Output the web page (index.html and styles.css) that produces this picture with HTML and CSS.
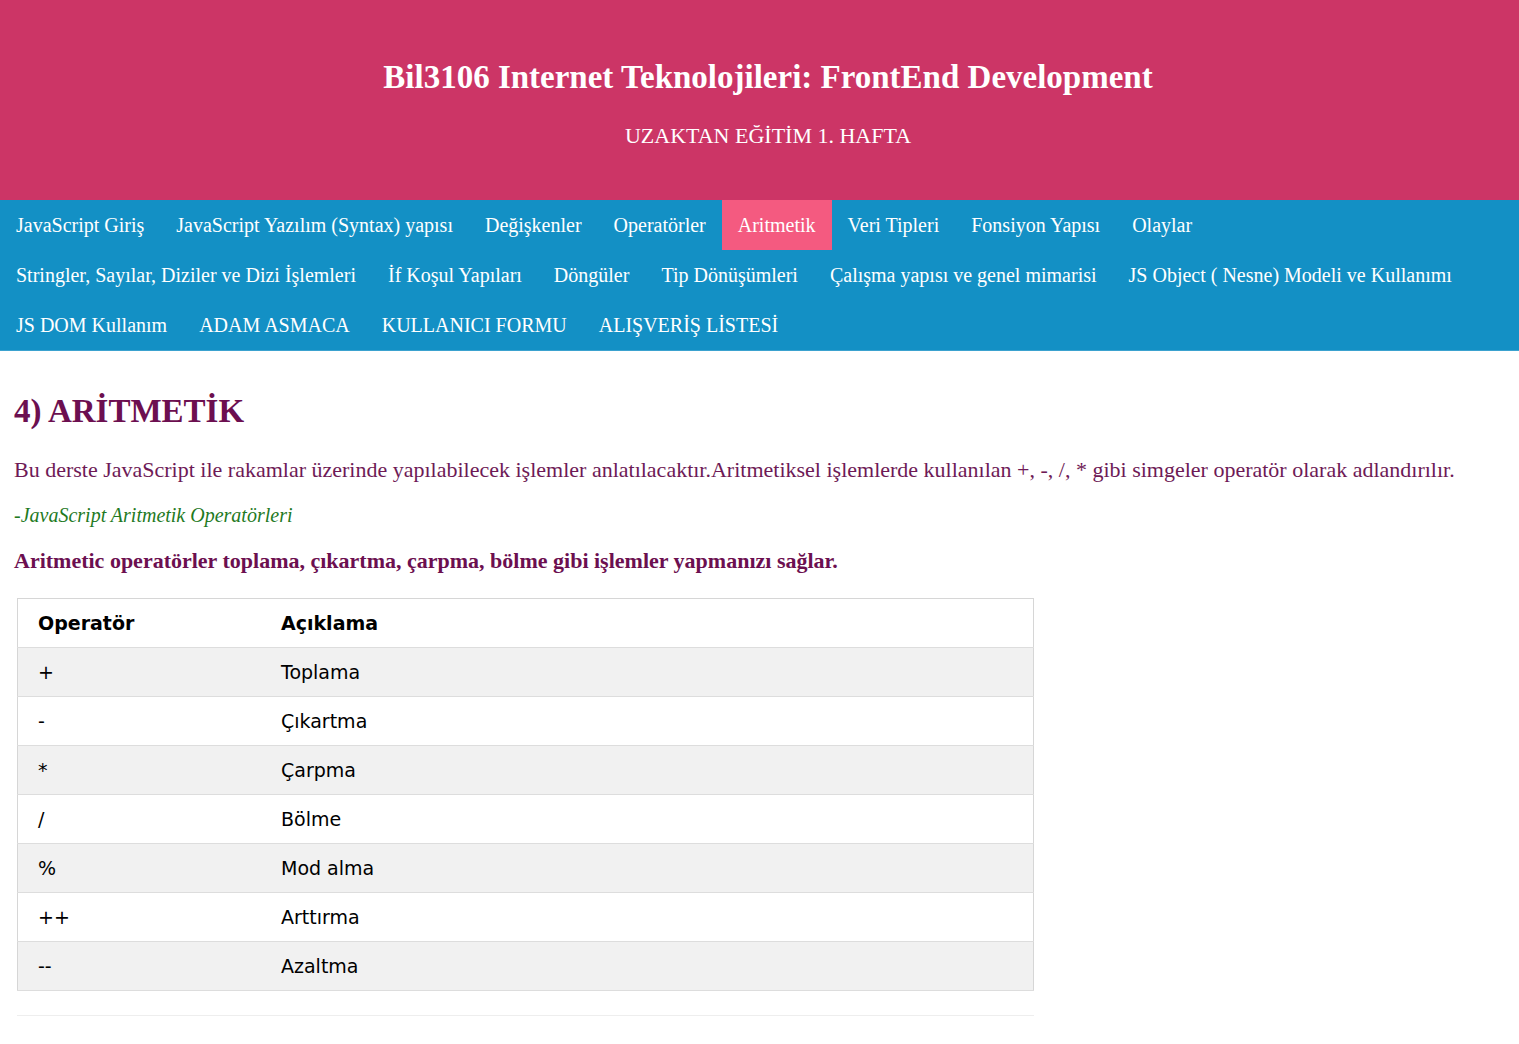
FILE: index.html
```html
<!DOCTYPE html>
<html lang="tr">
<head>
<meta charset="utf-8">
<title>Bil3106 Internet Teknolojileri</title>
<link rel="stylesheet" href="styles.css">
</head>
<body>
<header class="site-header">
  <h1 class="site-title">Bil3106 Internet Teknolojileri: FrontEnd Development</h1>
  <p class="site-subtitle">UZAKTAN EĞİTİM 1. HAFTA</p>
</header>
<nav class="topnav">
  <ul class="nav-list">
    <li><a class="nav-link" href="#">JavaScript Giriş</a></li>
    <li><a class="nav-link" href="#">JavaScript Yazılım (Syntax) yapısı</a></li>
    <li><a class="nav-link" href="#">Değişkenler</a></li>
    <li><a class="nav-link" href="#">Operatörler</a></li>
    <li><a class="nav-link active" href="#">Aritmetik</a></li>
    <li><a class="nav-link" href="#">Veri Tipleri</a></li>
    <li><a class="nav-link" href="#">Fonsiyon Yapısı</a></li>
    <li><a class="nav-link" href="#">Olaylar</a></li>
    <li><a class="nav-link" href="#">Stringler, Sayılar, Diziler ve Dizi İşlemleri</a></li>
    <li><a class="nav-link" href="#">İf Koşul Yapıları</a></li>
    <li><a class="nav-link" href="#">Döngüler</a></li>
    <li><a class="nav-link" href="#">Tip Dönüşümleri</a></li>
    <li><a class="nav-link" href="#">Çalışma yapısı ve genel mimarisi</a></li>
    <li><a class="nav-link" href="#">JS Object ( Nesne) Modeli ve Kullanımı</a></li>
    <li><a class="nav-link" href="#">JS DOM Kullanım</a></li>
    <li><a class="nav-link" href="#">ADAM ASMACA</a></li>
    <li><a class="nav-link" href="#">KULLANICI FORMU</a></li>
    <li><a class="nav-link" href="#">ALIŞVERİŞ LİSTESİ</a></li>
  </ul>
</nav>
<main class="content">
  <h2 class="page-heading">4) ARİTMETİK</h2>
  <p class="lead">Bu derste JavaScript ile rakamlar üzerinde yapılabilecek işlemler anlatılacaktır.Aritmetiksel işlemlerde kullanılan +, -, /, * gibi simgeler operatör olarak adlandırılır.</p>
  <p class="subtitle-green">-JavaScript Aritmetik Operatörleri</p>
  <p class="strong-line">Aritmetic operatörler toplama, çıkartma, çarpma, bölme gibi işlemler yapmanızı sağlar.</p>
  <table class="op-table">
    <thead>
      <tr><th class="col-op">Operatör</th><th>Açıklama</th></tr>
    </thead>
    <tbody>
      <tr><td>+</td><td>Toplama</td></tr>
      <tr><td>-</td><td>Çıkartma</td></tr>
      <tr><td>*</td><td>Çarpma</td></tr>
      <tr><td>/</td><td>Bölme</td></tr>
      <tr><td>%</td><td>Mod alma</td></tr>
      <tr><td>++</td><td>Arttırma</td></tr>
      <tr><td>--</td><td>Azaltma</td></tr>
    </tbody>
  </table>
  <hr class="divider">
</main>
</body>
</html>
```
FILE: styles.css
```css
html, body {
  margin: 0;
  padding: 0;
  background: #ffffff;
}
body {
  font-family: "Liberation Serif", "Times New Roman", serif;
}
.site-header {
  background: #cc3566;
  color: #ffffff;
  height: 200px;
  box-sizing: border-box;
  padding: 59px 0 0 17px;
  text-align: center;
}
.site-title {
  margin: 0;
  font-size: 33px;
  line-height: 37px;
  font-weight: bold;
}
.site-subtitle {
  margin: 27px 0 0;
  font-size: 22px;
  line-height: 25px;
}
.topnav {
  background: #1390c5;
  border-bottom: 1px solid #3ba2cf;
}
.nav-list {
  list-style: none;
  margin: 0;
  padding: 0;
  display: flex;
  flex-wrap: wrap;
}
.nav-link {
  display: block;
  padding: 0 16px;
  height: 50px;
  line-height: 50px;
  color: #ffffff;
  text-decoration: none;
  font-size: 20px;
}
.nav-link.active {
  background: #f45a80;
}
.content {
  padding: 40px 14px 0;
}
.page-heading {
  margin: 0;
  font-size: 33px;
  line-height: 40px;
  color: #6c0f50;
  font-weight: bold;
}
.lead {
  margin: 26px 0 0;
  font-size: 22px;
  line-height: 26px;
  color: #6e1a56;
}
.subtitle-green {
  margin: 20px 0 0;
  font-size: 20px;
  line-height: 24px;
  font-style: italic;
  color: #1f7a1f;
}
.strong-line {
  margin: 22px 0 0;
  font-size: 22px;
  line-height: 24px;
  font-weight: bold;
  color: #6c0f50;
}
.op-table {
  margin: 25px 0 0 3px;
  width: 1017px;
  border-collapse: collapse;
  border: 1px solid #d6d6d6;
  font-family: "DejaVu Sans", Verdana, sans-serif;
  font-size: 19px;
  color: #000000;
}
.op-table th,
.op-table td {
  text-align: left;
  padding: 12px 20px;
  line-height: 24px;
  border-bottom: 1px solid #dddddd;
}
.op-table th {
  font-weight: bold;
}
.col-op {
  width: 203px;
}
.op-table thead tr {
  background: #ffffff;
}
.op-table tbody tr:nth-child(odd) {
  background: #f1f1f1;
}
.op-table tbody tr:nth-child(even) {
  background: #ffffff;
}
.divider {
  margin: 24px 0 0 3px;
  width: 1017px;
  border: 0;
  border-top: 1px solid #eeeeee;
}
```
